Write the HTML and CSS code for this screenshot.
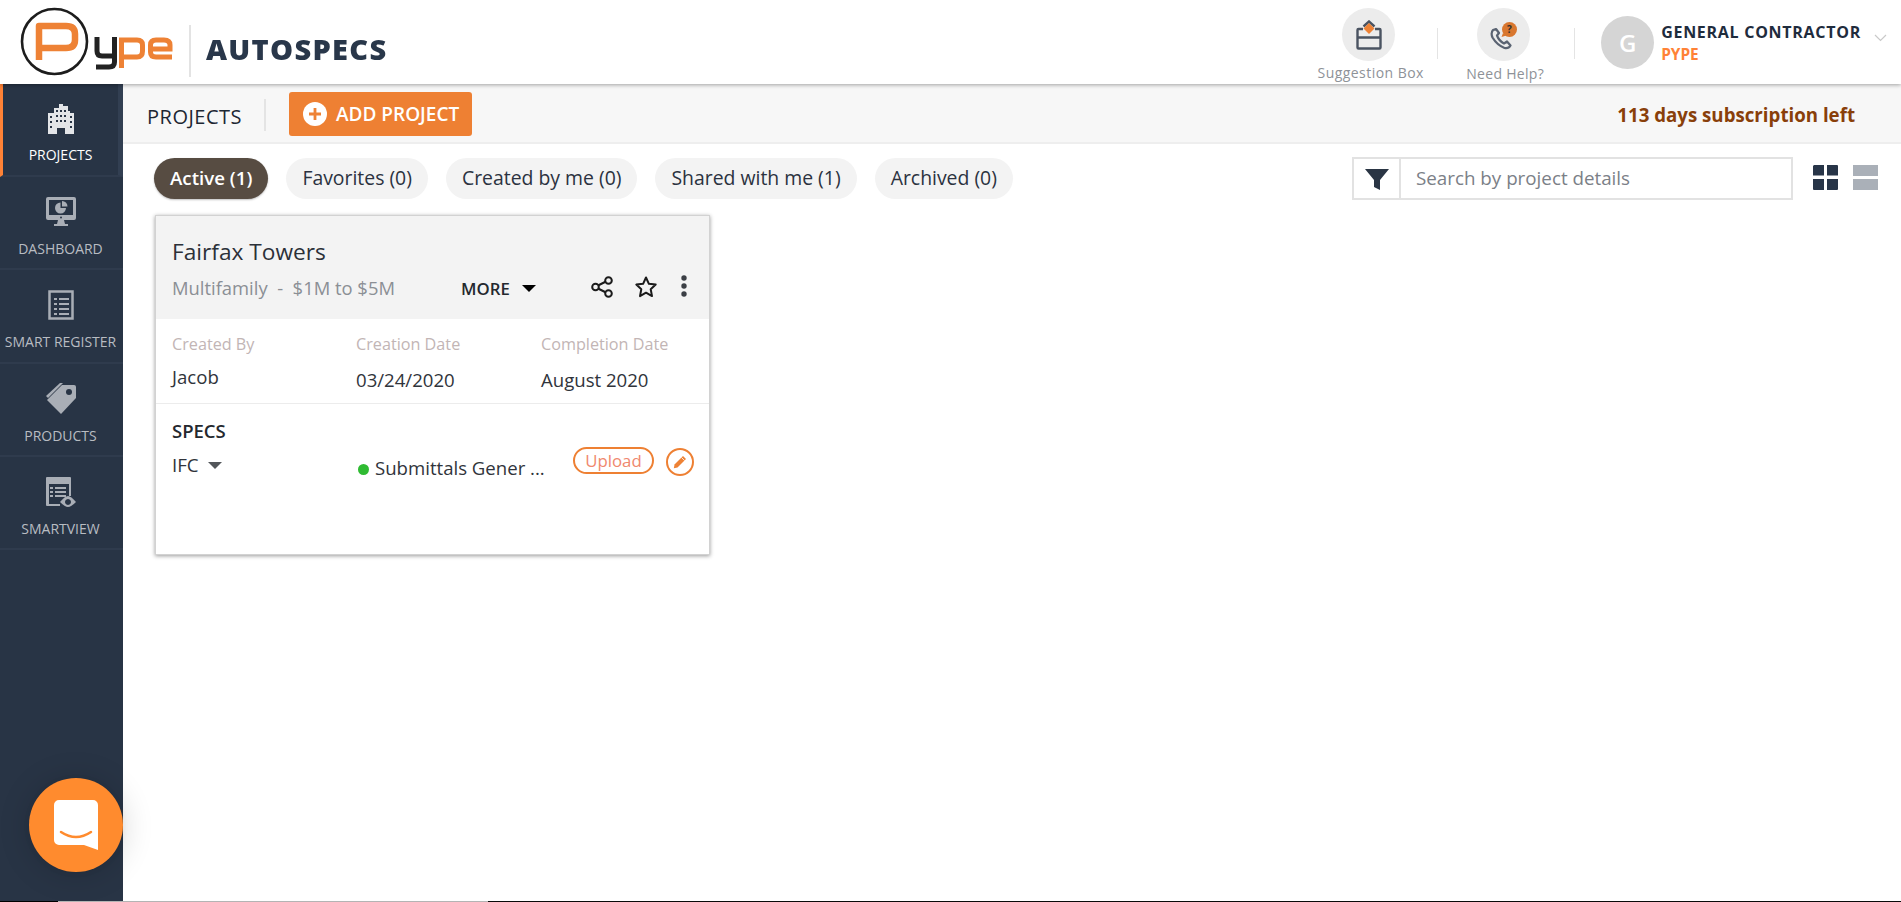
FILE: index.html
```html
<!DOCTYPE html>
<html lang="en">
<head>
<meta charset="utf-8">
<title>Pype AutoSpecs</title>
<link rel="stylesheet" href="styles.css">
</head>
<body>
<header class="topbar">
  <div class="brand">
    <svg class="logo" viewBox="0 0 172 70" width="172" height="70">
      <circle cx="34.500" cy="34.500" r="32.500" fill="none" stroke="#1d1d1d" stroke-width="2.600"/>
      <path d="M19 53V19H46Q55 19 55 27V33Q55 41 46 41H22" fill="none" stroke="#ee8235" stroke-width="6.500" stroke-linejoin="round"/>
      <path d="M77 30V44Q77 49 82 49H92M94.500 30V55Q94.500 60 89 60H76" fill="none" stroke="#222" stroke-width="5"/>
      <path d="M101.500 61V33H117Q122.500 33 122.500 38V44Q122.500 50 117 50H103" fill="none" stroke="#ee8235" stroke-width="5"/>
      <path d="M130 42H150V38Q150 33 144 33H136Q130.500 33 130.500 38V45Q130.500 50 136 50H152" fill="none" stroke="#ee8235" stroke-width="5"/>
    </svg>
    <span class="brand-divider"></span>
    <span class="brand-name">AUTOSPECS</span>
  </div>
  <div class="top-actions">
    <div class="action action-suggest">
      <span class="action-circle">
        <svg viewBox="0 0 26 30" width="26" height="30"><path d="M7 9H2.500a1 1 0 0 0-1 1v17.500a1 1 0 0 0 1 1h21a1 1 0 0 0 1-1V10a1 1 0 0 0-1-1H19M1.500 17.500h23M7.500 6.500L13 1.500l5.500 5" fill="none" stroke="#4a5361" stroke-width="2.400"/><path d="M13 3l5.500 5.500L13 14 7.500 8.500z" fill="#ee8235"/></svg>
      </span>
      <span class="action-label">Suggestion Box</span>
    </div>
    <span class="vline"></span>
    <div class="action action-help">
      <span class="action-circle">
        <svg viewBox="0 0 30 30" width="30" height="30"><path d="M5 10Q2.500 13 4.500 17.500Q9 25 16.500 28Q20.500 29 22.500 25.500L19 21.500L16 23.500Q11 21 9 15.500L11 13L8 9Z" fill="none" stroke="#5a6372" stroke-width="2.200" stroke-linejoin="round"/><circle cx="21.500" cy="9.500" r="7.500" fill="#d9772f"/><path d="M15 13l-1.500 4 5-1.500z" fill="#d9772f"/><text x="21.500" y="13" class="help-mark">?</text></svg>
      </span>
      <span class="action-label">Need Help?</span>
    </div>
    <span class="vline"></span>
    <div class="user">
      <span class="avatar">G</span>
      <div class="user-text">
        <span class="user-name">GENERAL CONTRACTOR</span>
        <span class="user-org">PYPE</span>
      </div>
      <svg class="chevron" viewBox="0 0 13 8" width="13" height="8"><path d="M1 1l5.500 5.500L12 1" fill="none" stroke="#c9c9c9" stroke-width="1.200"/></svg>
    </div>
  </div>
</header>

<div class="shell">
  <nav class="sidebar">
    <a class="nav-item is-active">
      <svg viewBox="0 0 30 30" width="30" height="30"><path fill="#e3e5e8" fill-rule="evenodd" d="M13 0h4v2h5v5h2v2h-2v0h6v21h-9v-6h-8v6H2V9h6V4h5zM10 6v2h2V6zM14 6v2h2V6zM18 6v2h2V6zM10 11v2h2v-2zM14 11v2h2v-2zM18 11v2h2v-2zM10 16v2h2v-2zM14 16v2h2v-2zM18 16v2h2v-2zM4 12v2h2v-2zM4 17v2h2v-2zM4 22v2h2v-2zM24 12v2h2v-2zM24 17v2h2v-2zM24 22v2h2v-2z"/></svg>
      <span>PROJECTS</span>
    </a>
    <a class="nav-item">
      <svg viewBox="0 0 30 30" width="30" height="30"><path fill="#a9aeb6" fill-rule="evenodd" d="M2 0h26a2 2 0 0 1 2 2v19a2 2 0 0 1-2 2H2a2 2 0 0 1-2-2V2a2 2 0 0 1 2-2zM3 3v15h24V3zM12 23h6l1 4h3v2H8v-2h3z"/><path fill="#a9aeb6" d="M14.500 5.500v5.500h5.500A5.500 5.500 0 1 1 14.500 5.500zM16 4a5.500 5.500 0 0 1 5.500 5.500H16z"/><circle cx="15" cy="20.500" r="1" fill="#283445"/></svg>
      <span>DASHBOARD</span>
    </a>
    <a class="nav-item">
      <svg viewBox="0 0 26 30" width="26" height="30"><path d="M1.500 1.500h23v27h-23z" fill="none" stroke="#a9aeb6" stroke-width="2.500"/><path d="M6 9h3M11 9h10M6 14h3M11 14h10M6 19h3M11 19h10M6 24h3M11 24h10" stroke="#a9aeb6" stroke-width="2"/></svg>
      <span>SMART REGISTER</span>
    </a>
    <a class="nav-item">
      <svg viewBox="0 0 30 32" width="30" height="32"><path fill="#a9aeb6" d="M16 2h12a2 2 0 0 1 2 2v11L15 31 1 17z"/><path d="M0 13L14 0h3L2 15z" fill="#a9aeb6"/><circle cx="23" cy="9" r="3" fill="#283445"/></svg>
      <span>PRODUCTS</span>
    </a>
    <a class="nav-item">
      <svg viewBox="0 0 30 30" width="30" height="30"><path fill="#a9aeb6" fill-rule="evenodd" d="M1 0h23a1 1 0 0 1 1 1v18h-2V7H3v20h11v2H1a1 1 0 0 1-1-1V1a1 1 0 0 1 1-1z"/><path d="M4 11h3M9 11h11M4 15h3M9 15h11M4 19h3M9 19h11" stroke="#a9aeb6" stroke-width="2"/><path fill="#a9aeb6" fill-rule="evenodd" d="M14 25q5-6 8-6t8 6q-5 5-8 5t-8-5zM22 22a3 3 0 1 0 .01 0z"/></svg>
      <span>SMARTVIEW</span>
    </a>
  </nav>

  <main class="main">
    <div class="toolbar">
      <h1 class="toolbar-title">PROJECTS</h1>
      <span class="toolbar-divider"></span>
      <button class="add-btn">
        <svg viewBox="0 0 24 24" width="24" height="24"><circle cx="12" cy="12" r="12" fill="#fff"/><path d="M12 6v12M6 12h12" stroke="#ee8235" stroke-width="2.800"/></svg>
        ADD PROJECT
      </button>
      <span class="subscription">113 days subscription left</span>
    </div>

    <div class="filters">
      <div class="chips">
        <span class="chip is-on">Active (1)</span>
        <span class="chip">Favorites (0)</span>
        <span class="chip">Created by me (0)</span>
        <span class="chip">Shared with me (1)</span>
        <span class="chip">Archived (0)</span>
      </div>
      <div class="search">
        <span class="search-filter">
          <svg viewBox="0 0 24 24" width="24" height="24"><path d="M0 2h24L15 13v10l-6-3v-7z" fill="#2a3544"/></svg>
        </span>
        <span class="search-text">Search by project details</span>
      </div>
      <div class="views">
        <svg viewBox="0 0 25 25" width="25" height="25"><path fill="#283548" d="M1 0h10v10.500H0V1zM14 0h10a1 1 0 0 1 1 1v9.500H14zM0 14h11v11H1a1 1 0 0 1-1-1zM14 14h11v10a1 1 0 0 1-1 1H14z"/></svg>
        <svg viewBox="0 0 25 25" width="25" height="25"><path fill="#aab0b8" d="M0 0h25v11H0zM0 14h25v11H0z"/></svg>
      </div>
    </div>

    <section class="card">
      <div class="card-head">
        <h2 class="card-title">Fairfax Towers</h2>
        <div class="card-subrow">
          <span class="card-sub">Multifamily&nbsp; -&nbsp; $1M to $5M</span>
          <span class="more">MORE<i class="caret caret-dark"></i></span>
          <svg class="icon-share" viewBox="0 0 22 22" width="22" height="22"><path d="M16 5L6 10M6 12l10 5" stroke="#1b1b1b" stroke-width="2"/><circle cx="17.500" cy="4.500" r="3.300" fill="#f3f3f3" stroke="#1b1b1b" stroke-width="2"/><circle cx="4.500" cy="11" r="3.300" fill="#f3f3f3" stroke="#1b1b1b" stroke-width="2"/><circle cx="17.500" cy="17.500" r="3.300" fill="#f3f3f3" stroke="#1b1b1b" stroke-width="2"/></svg>
          <svg class="icon-star" viewBox="0 0 24 24" width="24" height="24"><path d="M12 2.500l2.900 6.300 6.800.8-5 4.700 1.300 6.800-6-3.400-6 3.400 1.300-6.800-5-4.700 6.800-.8z" fill="none" stroke="#1b1b1b" stroke-width="2" stroke-linejoin="round"/></svg>
          <svg class="icon-dots" viewBox="0 0 6 22" width="6" height="22"><circle cx="3" cy="3" r="2.700" fill="#3b3f45"/><circle cx="3" cy="11" r="2.700" fill="#3b3f45"/><circle cx="3" cy="19" r="2.700" fill="#3b3f45"/></svg>
        </div>
      </div>
      <div class="meta">
        <div class="meta-col"><span class="meta-label">Created By</span><span class="meta-value meta-value-up">Jacob</span></div>
        <div class="meta-col"><span class="meta-label">Creation Date</span><span class="meta-value">03/24/2020</span></div>
        <div class="meta-col"><span class="meta-label">Completion Date</span><span class="meta-value">August 2020</span></div>
      </div>
      <div class="specs">
        <div class="specs-left">
          <span class="specs-title">SPECS</span>
          <span class="specs-type">IFC<i class="caret caret-gray"></i></span>
        </div>
        <div class="specs-status"><i class="dot"></i>Submittals Gener ...</div>
        <span class="upload">Upload</span>
        <span class="edit">
          <svg viewBox="0 0 14 14" width="14" height="14"><path d="M10 1l3 3-8.500 8.500L.8 13.200 1.500 9.500z" fill="#ee8235"/><path d="M8.500 2.500l3 3" stroke="#fff" stroke-width=".8"/></svg>
        </span>
      </div>
    </section>
  </main>
</div>

<button class="chat" aria-label="Chat">
  <svg viewBox="0 0 44 50" width="44" height="50"><path fill="#fff" d="M5 0h34a5 5 0 0 1 5 5v45l-14-5H5a5 5 0 0 1-5-5V5a5 5 0 0 1 5-5z"/><path d="M7 32q15 10 30 0" fill="none" stroke="#ff8b2e" stroke-width="2.500" stroke-linecap="round"/></svg>
</button>
<div class="bottom-line"></div>
</body>
</html>
```

FILE: styles.css
```css
* { box-sizing: border-box; }
html, body { margin: 0; height: 100%; overflow: hidden; }
body {
  font-family: "Open Sans", "Liberation Sans", sans-serif;
  color: #2b2f36;
  background: #fff;
  position: relative;
}
.topbar {
  height: 84px;
  display: flex;
  justify-content: space-between;
  background: #fff;
  box-shadow: 0 1px 4px rgba(0, 0, 0, .35);
  position: relative;
  z-index: 2;
}
.brand { display: flex; align-items: center; padding-left: 20px; }
.logo { filter: blur(.4px); }
.brand-divider { width: 2px; height: 52px; background: #e3e3e3; margin: 18px 0 0 -3px; }
.brand-name {
  font-weight: 800;
  font-size: 29px;
  letter-spacing: 1.300px;
  color: #29374a;
  margin: 12px 0 0 15px;
  filter: blur(.4px);
}
.top-actions { display: flex; align-items: flex-start; padding-right: 14px; }
.action { display: flex; flex-direction: column; align-items: center; padding-top: 8px; }
.action-suggest { width: 53px; margin-right: 42px; }
.action-help { width: 80px; margin: 0 31px 0 25px; }
.action-circle {
  width: 53px; height: 53px; border-radius: 50%;
  background: #ececec;
  display: flex; align-items: center; justify-content: center;
  flex: none;
}
.action-label { font-size: 14px; letter-spacing: .45px; color: #8e9298; margin-top: 2px; white-space: nowrap; padding-left: 4px; }
.action-help .action-label { margin-top: 3px; letter-spacing: .3px; }
.help-mark { font-size: 10px; font-weight: 700; fill: #30302e; text-anchor: middle; }
.vline { width: 1px; height: 31px; background: #e4e4e4; margin-top: 28px; }
.user { display: flex; align-items: flex-start; margin-left: 26px; padding-top: 16px; }
.avatar {
  width: 53px; height: 53px; border-radius: 50%;
  background: #d5d5d5; color: #fff;
  font-size: 24px; font-weight: 600;
  display: flex; align-items: center; justify-content: center;
}
.user-text { display: flex; flex-direction: column; margin-left: 7px; margin-top: 5px; }
.user-name { font-size: 16px; font-weight: 700; color: #1f2c3d; letter-spacing: .72px; line-height: 22px; white-space: nowrap; }
.user-org { font-size: 15.400px; font-weight: 700; color: #ff8236; line-height: 22px; margin-top: 1px; }
.chevron { margin: 18px 0 0 13px; }

.shell { display: flex; height: 817px; }
.sidebar { width: 123px; flex: none; background: #283445; color: #b8bcc2; }
.nav-item {
  height: 93.200px;
  display: flex; flex-direction: column; align-items: center;
  padding: 19px 2px 0 0;
  border-bottom: 2px solid #2f3b4d;
  font-size: 14px;
  line-height: 18px;
  white-space: nowrap;
}
.nav-item svg { display: block; height: 32px; margin-bottom: 12px; }
.nav-item.is-active {
  color: #fff;
  padding-right: 0;
  border-left: 3px solid #ff8236;
  border-right: 5px solid #323f52;
}
.nav-item.is-active svg { margin-bottom: 11px; }
.main { flex: 1; min-width: 0; }
.toolbar {
  height: 60px;
  background: #f7f7f7;
  border-bottom: 2px solid #eeeeee;
  display: flex; align-items: center;
  padding-left: 24px;
  padding-right: 46px;
}
.toolbar-title { margin: 6px 0 0; font-size: 20px; font-weight: 500; letter-spacing: .5px; color: #1d2733; }
.toolbar-divider { width: 2px; height: 32px; background: #e4e4e4; margin: 4px 23px 0 22px; }
.add-btn {
  height: 44px; width: 183px; flex: none;
  margin-top: 2px;
  border: 0; border-radius: 3px;
  background: #ee8033; color: #fff;
  font: 600 19px "Open Sans", sans-serif;
  display: flex; align-items: center; gap: 9px;
  padding: 0 0 0 14px;
  white-space: nowrap;
}
.subscription { margin-left: auto; margin-top: 2px; font-size: 18.700px; font-weight: 700; color: #893f0a; }
.filters { height: 70px; display: flex; align-items: flex-start; padding: 13px 23px 0 31px; }
.chips { display: flex; gap: 18px; margin-top: 1px; }
.chip {
  height: 41px; padding: 0 16px 2px;
  display: flex; align-items: center;
  background: #f3f3f3; color: #2b3240;
  border-radius: 21px;
  font-size: 19.400px; font-weight: 500;
  white-space: nowrap;
}
.chip.is-on { background: #574c42; color: #fff; font-size: 18.700px; font-weight: 600; box-shadow: 0 1px 2px rgba(0,0,0,.25); }
.search {
  margin-left: auto;
  width: 441px; height: 43px;
  border: 2px solid #e2e2e2;
  display: flex; align-items: center;
}
.search-filter { width: 47px; height: 100%; border-right: 2px solid #e2e2e2; display: flex; align-items: center; justify-content: center; }
.search-text { font-size: 18.800px; color: #7b8087; padding: 0 0 1px 15px; }
.views { display: flex; gap: 15px; margin: 8px 0 0 20px; }
.card {
  width: 555px; height: 340px;
  margin: 1px 0 0 32px;
  background: #fff;
  border: 1px solid #d2d2d2;
  box-shadow: 0 1px 4px rgba(0,0,0,.4);
}
.card-head { height: 103px; background: #f3f3f3; padding: 21px 16px 0 16px; }
.card-title { margin: 0; font-size: 22.700px; line-height: 30px; font-weight: 500; color: #2b3038; }
.card-subrow { display: flex; align-items: center; height: 34px; margin-top: 3px; }
.card-sub { font-size: 18.400px; color: #8b8f95; width: 289px; white-space: nowrap; flex: none; }
.more { font-size: 16.800px; font-weight: 550; color: #24282e; display: flex; align-items: center; margin-top: 2px; width: 130px; flex: none; }
.caret { display: inline-block; width: 0; height: 0; border-left: 7px solid transparent; border-right: 7px solid transparent; margin-left: 12px; }
.caret-dark { border-top: 7px solid #000; }
.caret-gray { border-top: 7px solid #53565a; }
.icon-share { margin-top: 0; }
.icon-star { margin: 0 0 0 21px; }
.icon-dots { margin: -2px 0 0 23px; }
.meta { display: grid; grid-template-columns: 184px 185px 1fr; height: 85px; padding: 13px 0 0 16px; border-bottom: 1px solid #ececec; }
.meta-col { display: flex; flex-direction: column; }
.meta-label { font-size: 16.200px; line-height: 24px; color: #c2b5b5; }
.meta-value { font-size: 18.600px; line-height: 24px; margin-top: 12px; color: #30343b; }
.meta-value-up { margin-top: 9px; }
.specs { display: flex; padding: 15px 0 0 16px; position: relative; }
.specs-left { width: 184px; display: flex; flex-direction: column; }
.specs-title { font-size: 18.500px; line-height: 24px; font-weight: 550; color: #24282e; }
.specs-type { font-size: 18.700px; line-height: 24px; margin-top: 10px; display: flex; align-items: center; color: #30343b; }
.specs-type .caret { margin-left: 9px; }
.specs-status { width: 217px; flex: none; margin-top: 37px; font-size: 18.600px; line-height: 24px; white-space: nowrap; display: flex; align-items: center; color: #30343b; }
.dot { width: 11px; height: 11px; border-radius: 50%; background: #2fbb32; margin: 2px 6px 0 2px; }
.upload {
  width: 81px; height: 27px; margin-top: 28px; flex: none;
  border: 2px solid #ee8033; border-radius: 14px;
  color: #f0886e; font-size: 16.800px; line-height: 23px; text-align: center;
}
.edit {
  width: 28px; height: 28px; margin: 29px 0 0 12px; flex: none;
  border: 2px solid #ee8033; border-radius: 50%;
  display: flex; align-items: center; justify-content: center;
}
.chat {
  position: absolute; left: 29px; top: 778px;
  width: 94px; height: 94px; padding: 0;
  border: 0; border-radius: 50%;
  background: #ff8b2e;
  box-shadow: 0 1px 6px rgba(0,0,0,.06), 0 2px 32px rgba(0,0,0,.16);
  display: flex; align-items: center; justify-content: center;
  z-index: 3;
}
.bottom-line {
  position: absolute; left: 0; right: 0; top: 901px; height: 1px;
  background: linear-gradient(to right, #000 58px, #b4b4b4 58px, #b4b4b4 488px, #0a0a0a 488px);
  z-index: 4;
}
```
